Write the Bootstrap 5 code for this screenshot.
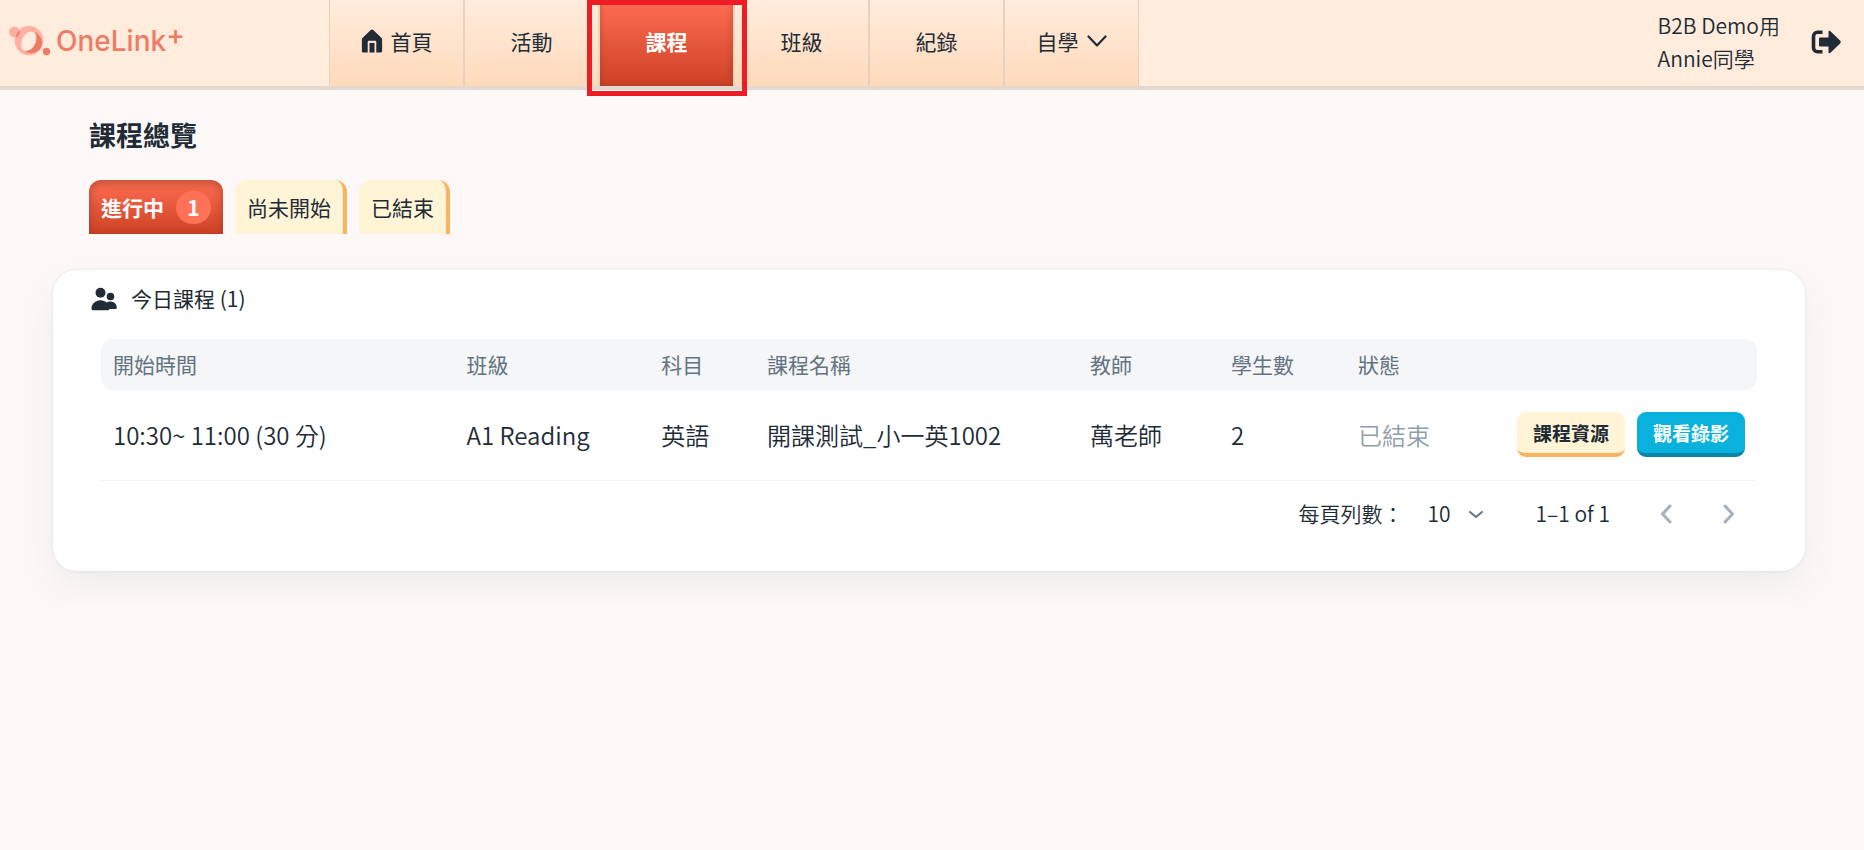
<!DOCTYPE html>
<html lang="zh-Hant">
<head>
<meta charset="utf-8">
<meta name="viewport" content="width=device-width, initial-scale=1">
<title>OneLink+ 課程總覽</title>
<link href="https://cdn.jsdelivr.net/npm/bootstrap@5.3.0/dist/css/bootstrap.min.css" rel="stylesheet">
<style>
  :root { --ink: #212b36; --muted: #637381; --faint: #919eab; --coral: #ee7b65; --cream: #fff4d6; --amber: #f9b462; }
  body { background: #fcf8f7; color: var(--ink); font-family: "Noto Sans CJK TC", sans-serif; font-size: 21px; line-height: 33px; font-weight: 350; }
  .topbar { background: #ffecdc; border-bottom: 4px solid #e3d8d0; min-height: 90px; }
  .brand-link { width: 329px; padding: 0 9px 4px; color: var(--coral); text-decoration: none; }
  .brand-name { font: 500 28px/34px Inter, sans-serif; margin-left: 5px; }
  .brand-plus { font: 500 28px/28px Inter, sans-serif; margin-bottom: 12px; }
  .menu-tab { width: 135px; padding-bottom: 4px; color: var(--ink); font-weight: 400; text-decoration: none; background: linear-gradient(#ffecdc, #ffdabb); border: 1px solid #e6d2c1; border-width: 0 1px; }
  .menu-tab.active { color: #fff; font-weight: 700; background: linear-gradient(#ff6e52, #cc4125); box-shadow: inset 0 0 6px rgba(120, 50, 30, .4); }
  .marker { position: absolute; inset: 0 -14px -10px -13px; border: 5px solid #ee1c25; z-index: 2; pointer-events: none; }
  .gap-menu { gap: 8px; }
  .user-area { gap: 31px; padding: 0 23px 3px 0; }
  .page { padding: 27px 59px 32px 53px; }
  .page-head { padding-left: 36px; }
  .page-title { font-size: 27px; line-height: 36px; font-weight: 700; margin-bottom: 27px; }
  .state-tabs { gap: 12px; margin-bottom: 36px; }
  .state-tab { height: 54px; padding: 0 12px; border: 0; border-radius: 12px 12px 0 0; color: var(--ink); font-weight: 400; background: var(--cream); }
  .state-tab:not(.active) { border-right: 4px solid var(--amber); }
  .state-tab.active { gap: 12px; color: #fff; font-weight: 700; background: linear-gradient(#ff6e52, #cc4125); box-shadow: inset 0 3px 9px rgba(120, 50, 30, .5); }
  .count { width: 35px; border-radius: 17px; background: #ff7257; }
  .panel { border: 0; border-radius: 24px; padding: 12px 48px 41px; box-shadow: 0 0 3px rgba(145, 158, 171, .24), 0 16px 32px -4px rgba(145, 158, 171, .14); }
  .panel-title { font-size: 21px; line-height: 33px; font-weight: 400; gap: 14px; margin: 0 0 24px -10px; }
  .lessons { table-layout: fixed; min-width: 1400px; margin: 0; color: inherit; border-collapse: separate; border-spacing: 0; }
  .lessons th { background: #f4f6f8; color: var(--muted); font-weight: 400; padding: 9px 12px; border: 0; }
  .lessons th:first-child { border-radius: 12px 0 0 12px; }
  .lessons th:last-child { border-radius: 0 12px 12px 0; }
  .lessons td { height: 91px; padding: 0 12px 2px; font-size: 24px; vertical-align: middle; border-bottom: 1px solid #f1f3f4; color: var(--ink); background: #fff; white-space: nowrap; }
  .lessons td.ended { color: var(--faint); }
  .btn-lesson { width: 108px; height: 45px; padding: 0; border: 0; border-bottom: 4px solid; border-radius: 9px; font-size: 19px; line-height: 33px; font-weight: 700; }
  .btn-files, .btn-files:hover { background: var(--cream); border-color: var(--amber); color: var(--ink); }
  .btn-video, .btn-video:hover { background: #08b2dc; border-color: #0a86a6; color: #fff; }
  .lesson-actions { gap: 12px; }
  .pager { padding-top: 16px; }
  .rows-select { width: 76px; margin: 0 44px 0 12px; padding: 0 30px 0 12px; height: 33px; border: 0; font: inherit; line-height: 33px; color: inherit; background: no-repeat right 8px center/16px url("data:image/svg+xml,%3Csvg xmlns='http://www.w3.org/2000/svg' viewBox='0 0 16 16'%3E%3Cpath fill='none' stroke='%23637381' stroke-width='2' stroke-linecap='round' stroke-linejoin='round' d='m2 6 6 5 6-5'/%3E%3C/svg%3E"); }
  .btn-page, .btn-page:disabled { width: 40px; height: 40px; padding: 0; border: 0; color: #a6b0bb; opacity: 1; }
  .pages { gap: 23px; margin: -5px 8px -2px 36px; }
</style>
</head>
<body>
<header class="topbar d-flex align-items-stretch">
  <a class="brand-link d-flex align-items-center flex-shrink-0" href="#" aria-label="OneLink+">
    <svg width="42" height="30" viewBox="0 0 42 30" aria-hidden="true">
      <circle cx="5.500" cy="6" r="5.500" fill="#ffb0a3"/>
      <path fill="#ffb0a3" fill-rule="evenodd" d="M20 0a14.300 14.600 0 1 0 0 29.200A14.300 14.600 0 1 0 20 0zM22 5.800c4 0 6 3.400 5.300 8.300-.9 6-5.300 11.200-9.800 11.200-4 0-5.800-4-5.100-8.800C13.300 10.800 17.300 5.800 22 5.800z"/>
      <path fill="#ee7b65" d="M25.500 5.600c5.200 3.400 8.200 7.600 7.500 12.400-.8 6-5.900 9-10.500 9-3 0-5.300-.9-7-2.300 5.400 1.200 10.800-3.700 11.800-10.600.5-3.600-.2-6.600-1.800-8.500zM6.800 11.300c.5-3 2-5.500 4.200-7 .2 3.500-1.500 6.400-4.200 7z"/>
      <circle cx="37.500" cy="25.500" r="3.700" fill="#ee7b65"/>
    </svg>
    <span class="brand-name">OneLink</span><span class="brand-plus">+</span>
  </a>
  <nav class="d-flex" aria-label="主選單">
    <a class="menu-tab d-flex align-items-center justify-content-center gap-menu" href="#">
      <svg width="22" height="24" viewBox="0 0 22 24" fill="currentColor" aria-hidden="true"><path d="M11 .5c.5 0 .9.200 1.300.5l8 7.800c.5.500.8 1.100.8 1.800V22c0 .9-.6 1.500-1.500 1.500h-4.300V13c0-.8-.5-1.300-1.300-1.300H8c-.8 0-1.300.5-1.300 1.300v10.500H2.400C1.500 23.500.9 22.900.9 22V10.600c0-.7.3-1.300.8-1.800L9.700 1c.4-.3.8-.5 1.300-.5zM8.500 14h5v9.500h-5z"/></svg>
      首頁</a>
    <a class="menu-tab d-flex align-items-center justify-content-center" href="#">活動</a>
    <a class="menu-tab active position-relative d-flex align-items-center justify-content-center" href="#" aria-current="page">課程<span class="marker"></span></a>
    <a class="menu-tab d-flex align-items-center justify-content-center" href="#">班級</a>
    <a class="menu-tab d-flex align-items-center justify-content-center" href="#">紀錄</a>
    <a class="menu-tab d-flex align-items-center justify-content-center gap-menu" href="#">自學
      <svg width="20" height="12" viewBox="0 0 20 12" fill="none" stroke="currentColor" stroke-width="2.200" stroke-linecap="round" stroke-linejoin="round" aria-hidden="true"><path d="m1.500 1.500 8.500 9 8.500-9"/></svg></a>
  </nav>
  <div class="user-area d-flex align-items-center ms-auto">
    <div class="text-nowrap">B2B Demo用<br>Annie同學</div>
    <a class="text-reset d-flex" href="#" aria-label="登出">
      <svg width="30" height="24" viewBox="0 0 30 24" fill="currentColor" aria-hidden="true"><path d="M11.500 2.300H6.500a4 4 0 0 0-4 4v11.400a4 4 0 0 0 4 4h5" fill="none" stroke="currentColor" stroke-width="3.600"/><path d="M9.500 7.500h8V2c0-1.200 1-1.600 1.900-.8l9.700 9.300c.9.900.9 2.100 0 3l-9.700 9.300c-.9.800-1.900.4-1.900-.8v-5.500h-8c-1 0-1.500-.5-1.500-1.500V9c0-1 .5-1.500 1.500-1.500z"/></svg>
    </a>
  </div>
</header>
<main class="page">
  <div class="page-head">
    <h1 class="page-title">課程總覽</h1>
    <div class="state-tabs d-flex" role="tablist">
      <button class="state-tab active d-flex align-items-center" type="button" role="tab" aria-selected="true">進行中 <span class="count">1</span></button>
      <button class="state-tab" type="button" role="tab" aria-selected="false">尚未開始</button>
      <button class="state-tab" type="button" role="tab" aria-selected="false">已結束</button>
    </div>
  </div>
  <section class="card panel">
    <h2 class="panel-title d-flex align-items-center">
      <svg width="26" height="24" viewBox="0 0 26 24" fill="currentColor" aria-hidden="true"><circle cx="9.500" cy="5.800" r="5"/><circle cx="19.500" cy="9.500" r="3.800"/><path d="M9.500 13.200c5.100 0 9 3.600 9 8.300 0 1-.7 1.700-1.700 1.700H2.200c-1 0-1.700-.7-1.700-1.700 0-4.700 3.900-8.300 9-8.300z"/><path d="M19.500 14.500c3.600 0 6.300 2.800 6.300 6.200 0 .8-.6 1.400-1.400 1.400H17l-1.500-6.300c1.100-.8 2.500-1.300 4-1.300z"/></svg>
      今日課程 (1)
    </h2>
    <div class="table-responsive">
      <table class="table lessons">
        <colgroup>
          <col style="width:21.35%"><col style="width:11.75%"><col style="width:6.4%"><col style="width:19.5%"><col style="width:8.51%"><col style="width:7.67%"><col style="width:9%"><col style="width:15.82%">
        </colgroup>
        <thead><tr><th scope="col">開始時間</th><th scope="col">班級</th><th scope="col">科目</th><th scope="col">課程名稱</th><th scope="col">教師</th><th scope="col">學生數</th><th scope="col">狀態</th><th scope="col" aria-label="操作"></th></tr></thead>
        <tbody><tr>
          <td>10:30~ 11:00 (30 分)</td><td>A1 Reading</td><td>英語</td><td>開課測試_小一英1002</td><td>萬老師</td><td>2</td><td class="ended">已結束</td>
          <td><div class="lesson-actions d-flex justify-content-end"><button class="btn btn-lesson btn-files" type="button">課程資源</button><button class="btn btn-lesson btn-video" type="button">觀看錄影</button></div></td>
        </tr></tbody>
      </table>
    </div>
    <div class="pager d-flex justify-content-end align-items-center">
      <label for="rows">每頁列數：</label>
      <select class="rows-select form-select" id="rows"><option>10</option><option>25</option></select>
      <span>1–1 of 1</span>
      <div class="pages d-flex">
        <button class="btn btn-page" type="button" disabled aria-label="上一頁"><svg width="12" height="20" viewBox="0 0 12 20" fill="none" stroke="currentColor" stroke-width="3" stroke-linecap="round" stroke-linejoin="round"><path d="m10 2-7.500 8 7.500 8"/></svg></button>
        <button class="btn btn-page" type="button" disabled aria-label="下一頁"><svg width="12" height="20" viewBox="0 0 12 20" fill="none" stroke="currentColor" stroke-width="3" stroke-linecap="round" stroke-linejoin="round"><path d="m2 2 7.500 8L2 18"/></svg></button>
      </div>
    </div>
  </section>
</main>
<script src="https://cdn.jsdelivr.net/npm/bootstrap@5.3.0/dist/js/bootstrap.bundle.min.js"></script>
</body>
</html>
